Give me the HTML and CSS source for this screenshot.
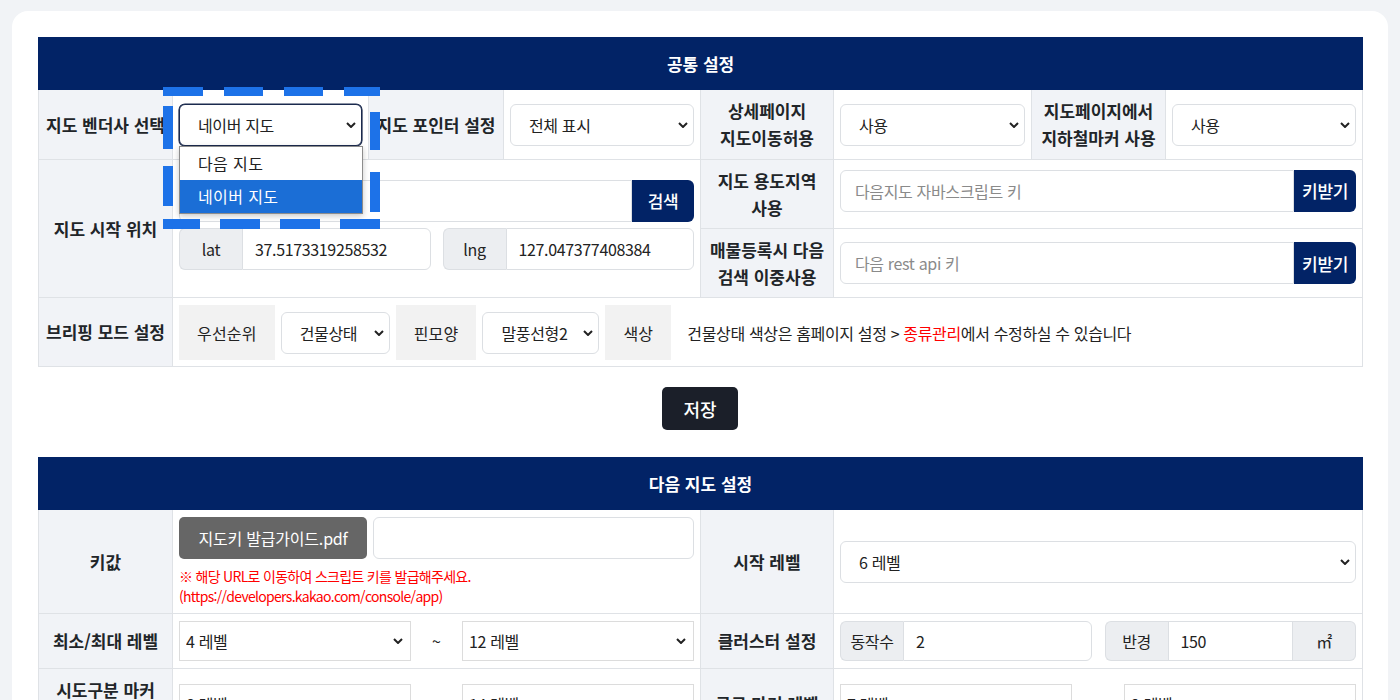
FILE: index.html
```html
<!DOCTYPE html>
<html lang="ko">
<head>
<meta charset="utf-8">
<title>지도 설정</title>
<link rel="stylesheet" href="styles.css">
</head>
<body>
<div class="card">
  <table class="cfg t1">
    <colgroup><col class="w134"><col class="w196"><col class="w135"><col class="w197"><col class="w133"><col class="w198"><col class="w134"><col class="w197"></colgroup>
    <thead><tr><th colspan="8" class="head">공통 설정</th></tr></thead>
    <tbody>
      <tr>
        <th class="lbl">지도 벤더사 선택</th>
        <td>
          <div class="sel-wrap">
            <select class="sel focus"><option>네이버 지도</option></select>
            <div class="popup">
              <div class="opt">다음 지도</div>
              <div class="opt on">네이버 지도</div>
            </div>
            <svg class="dash" width="217" height="142" viewBox="0 0 217 142">
              <rect x="0" y="0" width="40" height="9"/><rect x="61" y="0" width="39" height="9"/><rect x="121" y="0" width="39" height="9"/><rect x="181" y="0" width="36" height="9"/>
              <rect x="0" y="132" width="37" height="10"/><rect x="57" y="132" width="40" height="10"/><rect x="117" y="132" width="40" height="10"/><rect x="177" y="132" width="40" height="10"/>
              <rect x="0" y="19" width="10" height="43"/><rect x="0" y="79" width="10" height="40"/>
              <rect x="207" y="25" width="10" height="38"/><rect x="207" y="85" width="10" height="40"/>
            </svg>
          </div>
        </td>
        <th class="lbl">지도 포인터 설정</th>
        <td><select class="sel"><option>전체 표시</option></select></td>
        <th class="lbl">상세페이지<br>지도이동허용</th>
        <td><select class="sel"><option>사용</option></select></td>
        <th class="lbl">지도페이지에서<br>지하철마커 사용</th>
        <td><select class="sel"><option>사용</option></select></td>
      </tr>
      <tr>
        <th class="lbl sub" rowspan="2">지도 시작 위치</th>
        <td colspan="3" rowspan="2" class="loc">
          <div class="ig"><input class="fc l" type="text"><button class="btn-navy">검색</button></div>
          <div class="ll">
            <div class="ig"><span class="addon">lat</span><input class="fc" type="text" value="37.5173319258532"></div>
            <div class="ig"><span class="addon">lng</span><input class="fc" type="text" value="127.047377408384"></div>
          </div>
        </td>
        <th class="lbl sub">지도 용도지역<br>사용</th>
        <td colspan="3" class="up"><div class="ig"><input class="fc l" type="text" placeholder="다음지도 자바스크립트 키"><button class="btn-navy">키받기</button></div></td>
      </tr>
      <tr>
        <th class="lbl sub">매물등록시 다음<br>검색 이중사용</th>
        <td colspan="3"><div class="ig"><input class="fc l" type="text" placeholder="다음 rest api 키"><button class="btn-navy">키받기</button></div></td>
      </tr>
      <tr>
        <th class="lbl">브리핑 모드 설정</th>
        <td colspan="7" class="brief-cell">
          <div class="brief">
            <span class="box">우선순위</span>
            <select class="sel s109"><option>건물상태</option></select>
            <span class="box">핀모양</span>
            <select class="sel s117"><option>말풍선형2</option></select>
            <span class="box">색상</span>
            <span class="note">건물상태 색상은 홈페이지 설정 &gt; <span class="red">종류관리</span>에서 수정하실 수 있습니다</span>
          </div>
        </td>
      </tr>
    </tbody>
  </table>

  <div class="save-wrap"><button class="save">저장</button></div>

  <table class="cfg t2">
    <colgroup><col class="w134"><col class="w528"><col class="w133"><col class="w529"></colgroup>
    <thead><tr><th colspan="4" class="head">다음 지도 설정</th></tr></thead>
    <tbody>
      <tr>
        <th class="lbl">키값</th>
        <td>
          <div class="keyrow"><button class="btn-grey">지도키 발급가이드.pdf</button><input class="fc" type="text"></div>
          <p class="rnote">※ 해당 URL로 이동하여 스크립트 키를 발급해주세요.<br>(https://developers.kakao.com/console/app)</p>
        </td>
        <th class="lbl">시작 레벨</th>
        <td><select class="sel"><option>6 레벨</option></select></td>
      </tr>
      <tr>
        <th class="lbl">최소/최대 레벨</th>
        <td><div class="range"><select class="sel sq"><option>4 레벨</option></select><span class="tilde">~</span><select class="sel sq"><option>12 레벨</option></select></div></td>
        <th class="lbl">클러스터 설정</th>
        <td>
          <div class="cluster">
            <div class="ig"><span class="addon">동작수</span><input class="fc" type="text" value="2"></div>
            <div class="ig"><span class="addon">반경</span><input class="fc mid" type="text" value="150"><span class="addon end">㎡</span></div>
          </div>
        </td>
      </tr>
      <tr>
        <th class="lbl">시도구분 마커<br>레벨</th>
        <td><div class="range"><select class="sel sq"><option>8 레벨</option></select><span class="tilde">~</span><select class="sel sq"><option>14 레벨</option></select></div></td>
        <th class="lbl">군구 마커 레벨</th>
        <td><div class="range"><select class="sel sq"><option>7 레벨</option></select><span class="tilde">~</span><select class="sel sq"><option>9 레벨</option></select></div></td>
      </tr>
    </tbody>
  </table>
</div>
</body>
</html>
```
FILE: styles.css
```css
* { box-sizing: border-box; }
html, body { margin: 0; }
body {
  background: #f1f3f6;
  font-family: "Noto Sans CJK KR", "Noto Sans", sans-serif;
  font-size: 16px;
  color: #222;
}
.card {
  margin: 11px 12px 0;
  background: #fff;
  border-radius: 16px;
  padding: 26px 26px 40px;
}
table.cfg {
  width: 1324px;
  border-collapse: collapse;
  table-layout: fixed;
}
.w134 { width: 134px; } .w196 { width: 196px; } .w135 { width: 135px; } .w197 { width: 197px; }
.w133 { width: 133px; } .w198 { width: 198px; } .w528 { width: 528px; } .w529 { width: 529px; }
.cfg th, .cfg td {
  border: 1px solid #dfe2e6;
  padding: 7px 6px;
  vertical-align: middle;
}
.cfg .head {
  background: #022366;
  border-color: #022366;
  color: #fff;
  font-size: 17px;
  font-weight: 700;
  height: 52px;
  padding: 0;
  text-align: center;
}
.cfg .lbl {
  background: #f1f3f7;
  font-size: 17px;
  font-weight: 700;
  text-align: center;
  line-height: 27px;
  color: #212529;
  padding: 7px 3px 8px;
}
.cfg .lbl.sub { padding: 7px 3px; }
.sel {
  -webkit-appearance: none;
  appearance: none;
  display: block;
  width: 100%;
  height: 42px;
  font-family: inherit;
  font-size: 16px;
  color: #222;
  letter-spacing: -0.35px;
  border: 1px solid #dcdfe3;
  border-radius: 6px;
  padding: 0 24px 0 18px;
  background: #fff url("data:image/svg+xml,%3Csvg xmlns='http://www.w3.org/2000/svg' viewBox='0 0 10 6'%3E%3Cpath d='M1 1l4 4 4-4' fill='none' stroke='%23222' stroke-width='2'/%3E%3C/svg%3E") no-repeat right 5px center / 10px 6px;
}
.sel.focus {
  border-color: #1b2a4e;
  box-shadow: 0 0 0 0.6px #1b2a4e, 0 1px 2px rgba(0,0,0,.15);
}
.sel-wrap { position: relative; }
.popup {
  position: absolute;
  left: 0;
  top: 42px;
  width: 184px;
  background: #fff;
  border: 1px solid #8c8c8c;
  box-shadow: 0 2px 6px rgba(0,0,0,.22);
  z-index: 5;
}
.opt {
  height: 33px;
  line-height: 33px;
  padding-left: 18px;
  font-size: 16px;
  letter-spacing: 0.4px;
  color: #222;
}
.opt.on { background: #1b6ed6; color: #fff; }
.dash {
  position: absolute;
  left: -16px;
  top: -17px;
  z-index: 6;
  fill: #1d72e8;
  pointer-events: none;
}
.ig { display: flex; height: 42px; }
.fc {
  flex: 1 1 0;
  width: 0;
  min-width: 0;
  height: 100%;
  border: 1px solid #dcdfe3;
  border-radius: 0 6px 6px 0;
  background: #fff;
  font-family: inherit;
  font-size: 16px;
  color: #222;
  letter-spacing: -0.35px;
  padding: 0 12px;
  outline: none;
}
.fc.l { border-radius: 6px 0 0 6px; padding-left: 14px; }
.fc::placeholder { color: #8a8a8a; }
.addon {
  flex: none;
  width: 63px;
  background: #eceef1;
  border: 1px solid #dcdfe3;
  border-right: 0;
  border-radius: 6px 0 0 6px;
  display: flex;
  align-items: center;
  justify-content: center;
  letter-spacing: -0.35px;
}
.addon.end { border-right: 1px solid #dcdfe3; border-left: 0; border-radius: 0 6px 6px 0; }
.fc.mid { border-radius: 0; }
.btn-navy {
  flex: none;
  width: 62px;
  border: 0;
  border-radius: 0 6px 6px 0;
  background: #022366;
  color: #fff;
  font-family: inherit;
  font-size: 17px;
  font-weight: 500;
  letter-spacing: -0.3px;
  padding: 0;
}
.cfg .loc { padding: 6px 6px 14px; }
.cfg .up { padding: 5px 6px 12px; }
.ll { display: flex; gap: 12px; margin-top: 6px; }
.ll .ig { flex: 1 1 0; min-width: 0; }
.cfg .brief-cell { padding: 7px 6px 6px; }
.brief { display: flex; align-items: center; gap: 6px; }
.box {
  height: 55px;
  background: #f2f2f2;
  display: flex;
  align-items: center;
  padding: 0 18px;
  letter-spacing: 0.2px;
}
.brief .s109 { width: 109px; }
.brief .s117 { width: 117px; }
.note { margin-left: 10px; letter-spacing: -0.35px; }
.red { color: #ff0000; }
.save-wrap { display: flex; justify-content: center; padding: 20px 0 27px; }
.save {
  width: 76px;
  height: 43px;
  border: 0;
  border-radius: 5px;
  background: #1b1f29;
  color: #fff;
  font-family: inherit;
  font-size: 18px;
  font-weight: 500;
  padding: 0;
}
.keyrow { display: flex; gap: 6px; height: 42px; }
.btn-grey {
  flex: none;
  width: 188px;
  border: 0;
  border-radius: 5px;
  background: #666;
  color: #fff;
  font-family: inherit;
  font-size: 16px;
  letter-spacing: -0.2px;
  padding: 0;
}
.keyrow .fc { border-radius: 6px; }
.rnote {
  margin: 7px 0 0;
  color: #ff0000;
  font-size: 14px;
  line-height: 20px;
  letter-spacing: -0.7px;
}
.range { display: flex; align-items: center; }
.sel.sq {
  width: 232px;
  flex: none;
  height: 40px;
  border-radius: 0;
  border-color: #dcdcdc;
  padding-left: 6px;
  background-position: right 7px center;
}
.tilde { flex: 1; text-align: center; }
.cluster { display: flex; gap: 13px; }
.cluster .ig { flex: 1 1 0; min-width: 0; height: 40px; }
```
